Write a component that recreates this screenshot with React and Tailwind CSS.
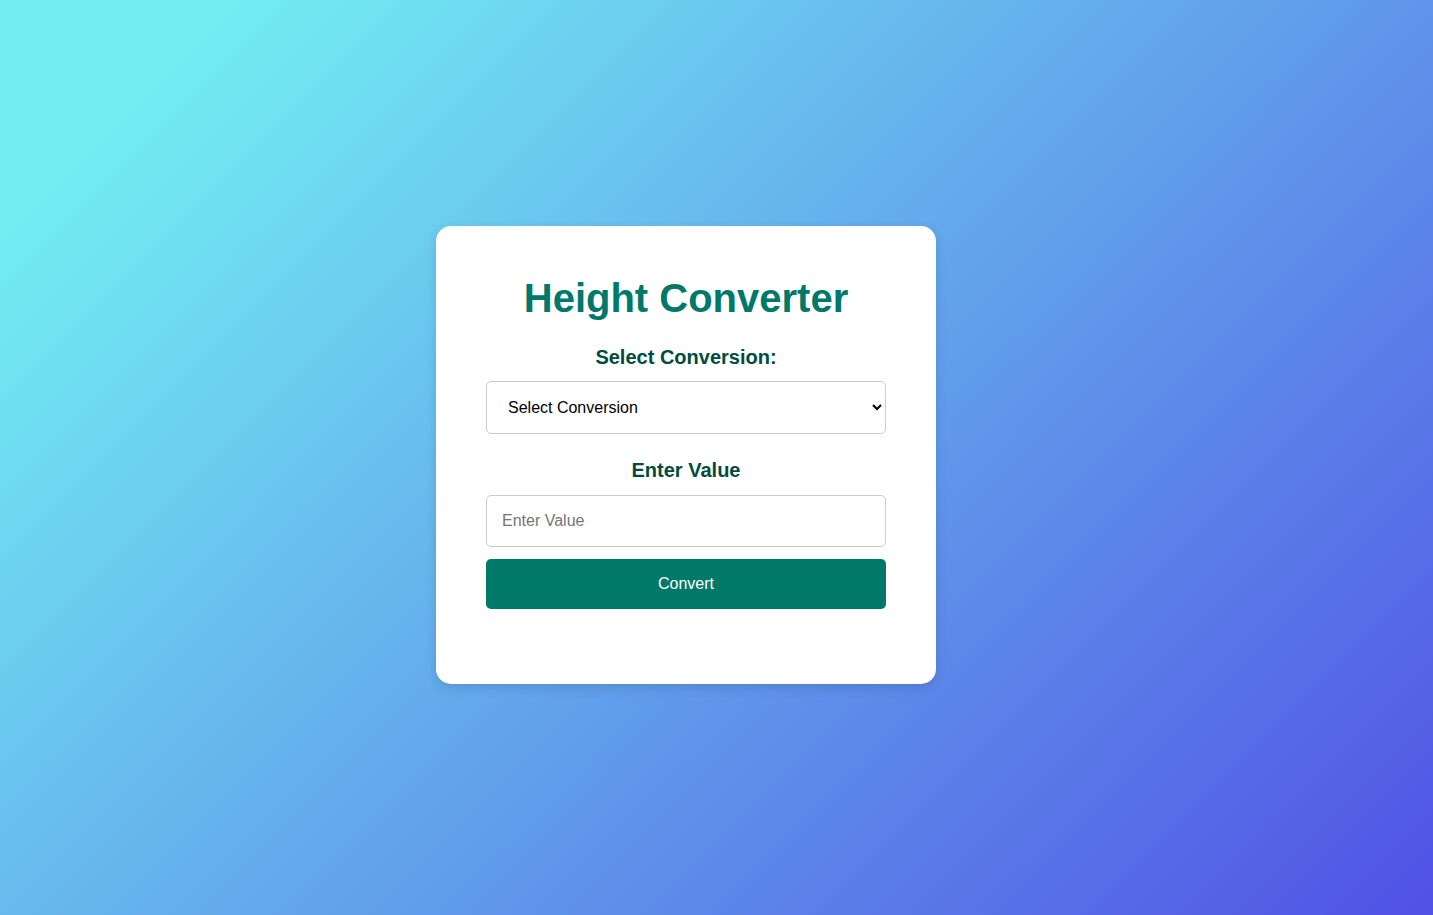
import { useState } from "react"

export default function App() {
  const [conversion, setConversion] = useState("")
  const [value, setValue] = useState("")

  return (
    <div
      className="min-h-screen w-full flex items-center justify-center pr-[61px] pb-[6px] bg-[linear-gradient(135deg,#72edf2_10%,#5151e5_100%)]"
      style={{ fontFamily: '"Liberation Sans", Arial, sans-serif' }}
    >
      <div className="w-[500px] bg-white rounded-[15px] shadow-[0_4px_12px_rgba(0,0,0,0.12)] px-[50px] pt-[49px] pb-[75px] flex flex-col items-stretch">
        <h1 className="text-[40px] leading-[46px] font-bold text-[#00796b] text-center">
          Height Converter
        </h1>

        <label className="mt-[25px] text-[20px] leading-[23px] font-bold text-[#004d40] text-center">
          Select Conversion:
        </label>
        <select
          value={conversion}
          onChange={(e) => setConversion(e.target.value)}
          className="mt-[12px] h-[53px] w-full border border-[#cccccc] rounded-[5px] bg-white pl-[17px] pr-[8px] text-[16px] text-black outline-none"
        >
          <option value="">Select Conversion</option>
          <option value="cm-ft">Centimeters to Feet</option>
          <option value="ft-cm">Feet to Centimeters</option>
          <option value="m-in">Meters to Inches</option>
          <option value="in-m">Inches to Meters</option>
        </select>

        <label className="mt-[25px] text-[20px] leading-[23px] font-bold text-[#004d40] text-center">
          Enter Value
        </label>
        <input
          type="number"
          value={value}
          onChange={(e) => setValue(e.target.value)}
          placeholder="Enter Value"
          className="mt-[13px] h-[52px] w-full border border-[#cccccc] rounded-[5px] px-[15px] text-[16px] text-black placeholder:text-[#757575] outline-none"
        />

        <button className="mt-[12px] h-[50px] w-full rounded-[5px] bg-[#00796b] text-white text-[16px]">
          Convert
        </button>
      </div>
    </div>
  )
}
